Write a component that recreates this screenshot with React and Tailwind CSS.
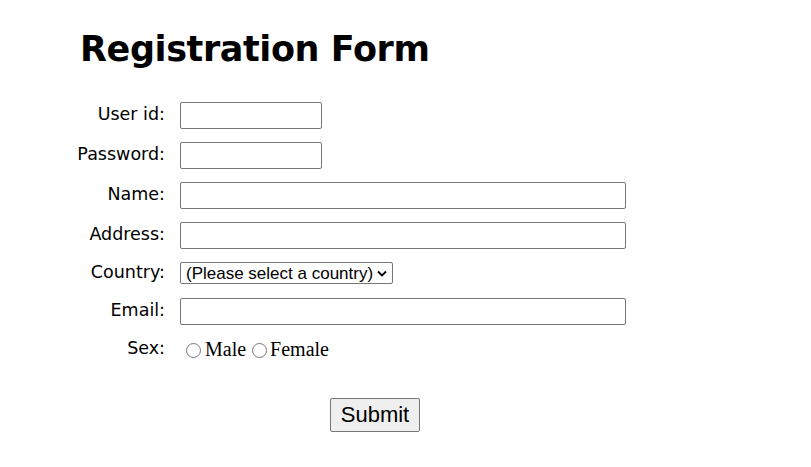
import React from "react";

const labelCls = "text-right pr-[15px] pb-[2px] text-[17.5px] text-black";
const inputCls = "h-[27px] border border-[#767676] rounded-[2px] bg-white px-1 outline-none";

function Row({ label, h = "h-[40px]", children }) {
  return (
    <div className={`flex items-center ${h}`}>
      <div className={`w-[120px] shrink-0 ${labelCls}`}>{label}</div>
      <div className="flex items-center">{children}</div>
    </div>
  );
}

export default function App() {
  return (
    <div className="min-h-[467px] w-[811px] bg-white text-black" style={{ fontFamily: '"DejaVu Sans", Verdana, sans-serif' }}>
      <h1 className="pl-[80px] pt-[29px] h-[95px] text-[35px] font-bold leading-[40px] tracking-[-0.4px]">
        Registration Form
      </h1>
      <form className="pl-[60px]" onSubmit={(e) => e.preventDefault()}>
        <Row label="User id:">
          <input type="text" className={`${inputCls} w-[142px]`} />
        </Row>
        <Row label="Password:">
          <input type="password" className={`${inputCls} w-[142px]`} />
        </Row>
        <Row label="Name:">
          <input type="text" className={`${inputCls} w-[446px]`} />
        </Row>
        <Row label="Address:">
          <input type="text" className={`${inputCls} w-[446px]`} />
        </Row>
        <Row label="Country:" h="h-[36px]">
          <div className="relative h-[22px] w-[213px] border border-[#767676] rounded-[2px] bg-white flex items-center pl-[5px] text-[17px]" style={{ fontFamily: '"Liberation Sans", Arial, sans-serif' }}>
            <span className="leading-none">(Please select a country)</span>
            <svg className="absolute right-[5px] top-[7px]" width="10" height="7" viewBox="0 0 10 7">
              <path d="M1 1.5 L5 5.5 L9 1.5" fill="none" stroke="#000" strokeWidth="1.8" />
            </svg>
          </div>
        </Row>
        <Row label="Email:">
          <input type="text" className={`${inputCls} w-[446px]`} />
        </Row>
        <Row label="Sex:" h="h-[36px]">
          <div className="flex items-center text-[20px]" style={{ fontFamily: '"Liberation Serif", "Times New Roman", serif' }}>
            <span className="ml-[6px] mt-[2px] w-[15px] h-[15px] rounded-full border border-[#767676] bg-white" />
            <span className="ml-[4px]">Male</span>
            <span className="ml-[6px] mt-[2px] w-[15px] h-[15px] rounded-full border border-[#767676] bg-white" />
            <span className="ml-[3px]">Female</span>
          </div>
        </Row>
        <div className="pl-[270px] pt-[31px]">
          <button type="submit" className="h-[34px] w-[90px] border border-[#767676] rounded-[2px] bg-[#efefef] text-[22px] leading-none text-black" style={{ fontFamily: '"Liberation Sans", Arial, sans-serif' }}>
            Submit
          </button>
        </div>
      </form>
    </div>
  );
}
